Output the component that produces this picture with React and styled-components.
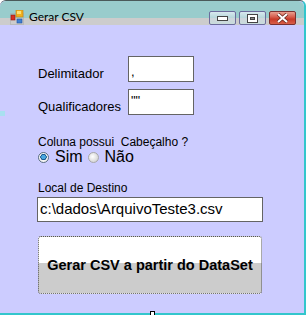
import React from "react";
import styled, { createGlobalStyle } from "styled-components";

const GlobalStyle = createGlobalStyle`
  html, body {
    margin: 0;
    padding: 0;
    background: #ffffff;
  }
  body {
    font-family: "Liberation Sans", Arial, sans-serif;
    color: #000;
  }
`;

const Window = styled.div`
  position: relative;
  width: 306px;
  height: 315px;
  box-sizing: border-box;
  display: flex;
  flex-direction: column;
  background: #ccccff;
  border-top: 1px solid #4a5a5a;
  border-right: 2px solid #33c6cc;
  border-bottom: 2px solid #33c6cc;
  border-radius: 6px 6px 0 0;
`;

const TitleBar = styled.div`
  height: 24px;
  display: flex;
  align-items: flex-start;
  padding: 0 8px 0 10px;
  border-radius: 6px 6px 0 0;
  background: linear-gradient(to bottom, #99cccc 0 17px, #cccccc 17px 24px);
`;

const AppIcon = styled.svg`
  margin-top: 9px;
  flex: none;
`;

const Title = styled.span`
  margin: 9px 0 0 5px;
  font-family: "Lato", "Liberation Sans", sans-serif;
  font-size: 12px;
  line-height: 14px;
  flex: 1;
`;

const Controls = styled.div`
  display: flex;
  gap: 3px;
  margin-top: 10px;
`;

const CtrlButton = styled.div`
  width: 27px;
  height: 14px;
  box-sizing: border-box;
  display: flex;
  align-items: center;
  justify-content: center;
  border: 1px solid ${(p) => (p.close ? "#7a3030" : "#6c6c9c")};
  border-radius: 2px;
  background: ${(p) =>
    p.close
      ? "linear-gradient(to bottom, #e8a090 0, #d86050 40%, #c83a28 60%, #d8604a 100%)"
      : "linear-gradient(to bottom, #d8e8ee 0, #b8d8dc 45%, #cfd6dc 55%, #c8dcdc 100%)"};
`;

const Client = styled.div`
  flex: 1;
  display: flex;
  flex-direction: column;
  align-items: flex-start;
  padding-left: 38px;
`;

const Fields = styled.div`
  margin-top: 31px;
  display: grid;
  grid-template-columns: 90px 66px;
  grid-auto-rows: 26px;
  row-gap: 7px;
`;

const FieldLabel = styled.span`
  align-self: end;
  font-size: 13px;
  line-height: 15px;
  margin-bottom: 1px;
`;

const TextBox = styled.div`
  box-sizing: border-box;
  height: 26px;
  border: 1px solid #646464;
  background: #ffffff;
  font-size: 13px;
  line-height: 13px;
  padding: ${(p) => p.top}px 0 0 2px;
  white-space: pre;
`;

const Caption = styled.div`
  font-size: 12px;
  line-height: ${(p) => p.lh}px;
  white-space: pre;
  margin-top: ${(p) => p.top}px;
`;

const RadioRow = styled.div`
  display: flex;
  align-items: center;
  margin-top: 3px;
  font-size: 16px;
  line-height: 12px;
  height: 12px;
`;

const RadioOption = styled.label`
  display: flex;
  align-items: center;
  gap: 6px;
  margin-right: 5px;
`;

const RadioDot = styled.span`
  width: 11px;
  height: 11px;
  box-sizing: border-box;
  border-radius: 50%;
  border: 1px solid ${(p) => (p.checked ? "#5a6e80" : "#a8a8a8")};
  background: ${(p) =>
    p.checked
      ? "radial-gradient(circle at 50% 45%, #4aa8e0 0 2px, #1a5a90 2.4px 3px, #f4f4f4 3.4px)"
      : "radial-gradient(circle at 40% 40%, #ffffff 0, #d8d8d8 70%, #c8c8c8 100%)"};
`;

const PathBox = styled.div`
  box-sizing: border-box;
  width: 226px;
  height: 25px;
  margin: 2px 0 0 -1px;
  border: 1px solid #646464;
  background: #ffffff;
  font-size: 15px;
  line-height: 22px;
  padding-left: 2px;
`;

const ActionButton = styled.button`
  box-sizing: border-box;
  width: 224px;
  height: 58px;
  margin-top: 14px;
  padding: 0;
  border: 1px dotted #555555;
  border-radius: 3px;
  background: linear-gradient(to bottom, #ffffff 0 26px, #cccccc 26px);
  font-family: "Liberation Sans", Arial, sans-serif;
  font-weight: bold;
  font-size: 14.5px;
  color: #000;
`;

const Grip = styled.span`
  position: absolute;
  width: 5px;
  height: 5px;
  box-sizing: border-box;
  left: ${(p) => p.x}px;
  top: ${(p) => p.y}px;
  background: ${(p) => p.bg || "#ffffff"};
  border: ${(p) => (p.plain ? "none" : "1px solid #000")};
`;

function App() {
  return (
    <>
      <GlobalStyle />
      <Window>
        <TitleBar>
          <AppIcon width="14" height="15" viewBox="0 0 14 15">
            <rect x="0.5" y="3.5" width="13" height="11" fill="none" stroke="#a8a8a8" strokeDasharray="1 1" />
            <rect x="6" y="0" width="7" height="7" fill="#f0b020" stroke="#c08010" strokeWidth="0.6" />
            <rect x="7" y="1" width="4" height="3" fill="#ffe070" />
            <rect x="1" y="5" width="4" height="5" fill="#d83020" stroke="#901810" strokeWidth="0.6" />
            <rect x="7" y="9" width="5" height="4" fill="#4080d0" stroke="#2050a0" strokeWidth="0.6" />
          </AppIcon>
          <Title>Gerar CSV</Title>
          <Controls>
            <CtrlButton>
              <svg width="11" height="6" viewBox="0 0 11 6">
                <rect x="0.5" y="1.5" width="10" height="4" fill="#ffffff" stroke="#444" />
              </svg>
            </CtrlButton>
            <CtrlButton>
              <svg width="11" height="9" viewBox="0 0 11 9">
                <rect x="0.5" y="0.5" width="10" height="8" fill="#ffffff" stroke="#444" />
                <rect x="3.5" y="3.5" width="4" height="2" fill="#888" stroke="#444" />
              </svg>
            </CtrlButton>
            <CtrlButton close>
              <svg width="13" height="10" viewBox="0 0 13 10">
                <path d="M2 1 L11 9 M11 1 L2 9" stroke="#6a2a20" strokeWidth="3.6" />
                <path d="M2 1 L11 9 M11 1 L2 9" stroke="#ffffff" strokeWidth="2" />
              </svg>
            </CtrlButton>
          </Controls>
        </TitleBar>
        <Client>
          <Fields>
            <FieldLabel>Delimitador</FieldLabel>
            <TextBox top={8}>,</TextBox>
            <FieldLabel>Qualificadores</FieldLabel>
            <TextBox top={4}>""</TextBox>
          </Fields>
          <Caption top={21} lh={12}>Coluna possui  Cabeçalho ?</Caption>
          <RadioRow>
            <RadioOption>
              <RadioDot checked />
              Sim
            </RadioOption>
            <RadioOption>
              <RadioDot />
              Não
            </RadioOption>
          </RadioRow>
          <Caption top={18} lh={14}>Local de Destino</Caption>
          <PathBox>c:\dados\ArquivoTeste3.csv</PathBox>
          <ActionButton>Gerar CSV a partir do DataSet</ActionButton>
        </Client>
        <Grip x={0} y={110} bg="#a8e0f0" plain />
        <Grip x={150} y={310} />
      </Window>
    </>
  );
}

export default App;
